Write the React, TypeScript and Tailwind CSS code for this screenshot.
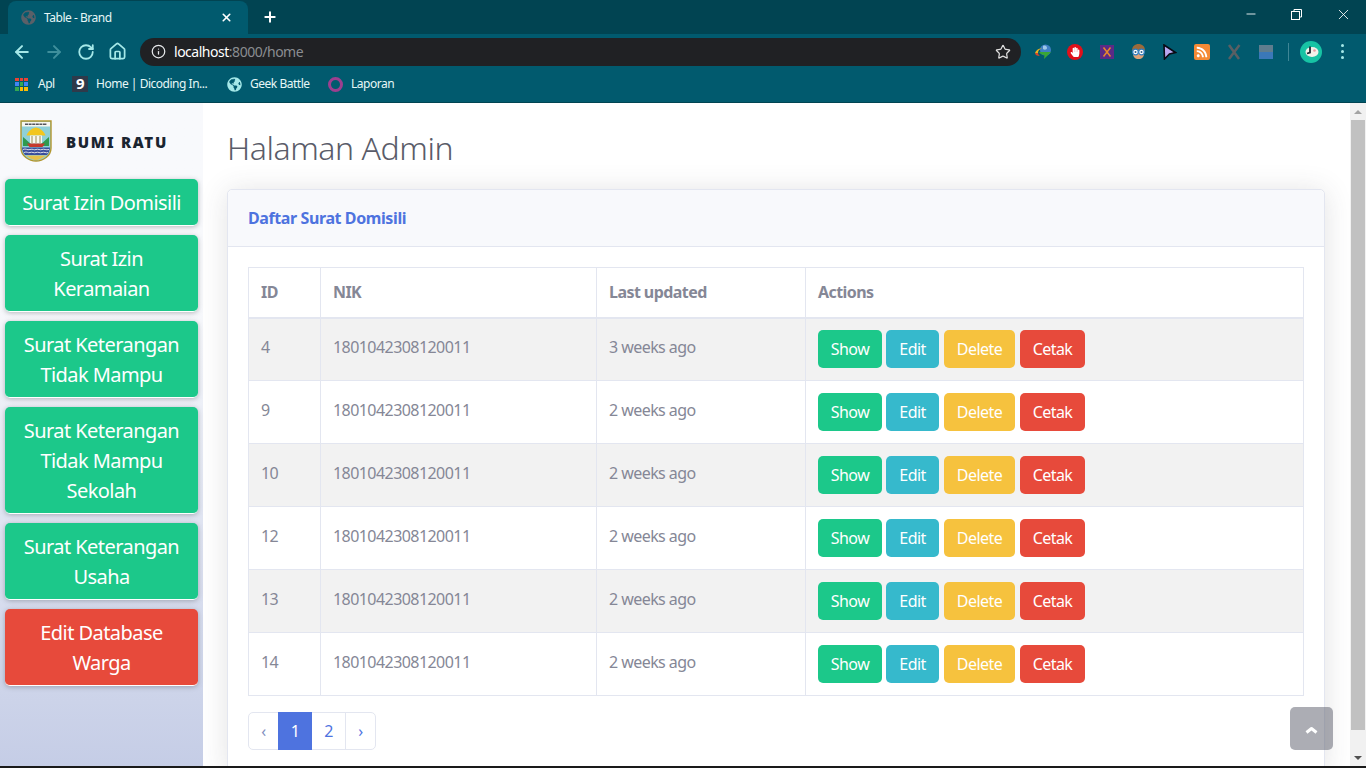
import { ArrowLeft, ArrowRight, House, Info, Minus, Plus, RotateCw, Star, X } from "lucide-react";
import { FaGlobeAmericas, FaHandPaper, FaRss } from "react-icons/fa";

const menu = [
  { label: ["Surat Izin Domisili"], color: "bg-[#1cc88a]" },
  { label: ["Surat Izin", "Keramaian"], color: "bg-[#1cc88a]" },
  { label: ["Surat Keterangan", "Tidak Mampu"], color: "bg-[#1cc88a]" },
  { label: ["Surat Keterangan", "Tidak Mampu", "Sekolah"], color: "bg-[#1cc88a]" },
  { label: ["Surat Keterangan", "Usaha"], color: "bg-[#1cc88a]" },
  { label: ["Edit Database", "Warga"], color: "bg-[#e74a3b]" },
];

const rows = [
  { id: 4, updated: "3 weeks ago" },
  { id: 9, updated: "2 weeks ago" },
  { id: 10, updated: "2 weeks ago" },
  { id: 12, updated: "2 weeks ago" },
  { id: 13, updated: "2 weeks ago" },
  { id: 14, updated: "2 weeks ago" },
];

const actions = [
  { label: "Show", className: "w-[64px] bg-[#1cc88a]" },
  { label: "Edit", className: "w-[53px] ml-[4px] bg-[#36b9cc]" },
  { label: "Delete", className: "w-[71px] ml-[5px] bg-[#f6c23e]" },
  { label: "Cetak", className: "w-[65px] ml-[5px] bg-[#e74a3b]" },
];

const appDots = [
  "bg-[#ea4335]", "bg-[#ea4335]", "bg-[#ea4335]",
  "bg-[#4285f4]", "bg-[#34a853]", "bg-[#4285f4]",
  "bg-[#34a853]", "bg-[#fbbc05]", "bg-[#fbbc05]",
];

function Crest() {
  return (
    <svg width="32" height="42" viewBox="0 0 32 42">
      <path d="M1 1h30v27c0 8-8 13-15 13S1 36 1 28z" fill="#8fd0d8" stroke="#b2962e" strokeWidth="1.400" />
      <rect x="2" y="2" width="28" height="4.500" fill="#f6f6f0" />
      <path d="M5 4.200h22" stroke="#55555a" strokeWidth="1.400" strokeDasharray="3 .6" />
      <path d="M16 7.500c5 1 8 4 9.500 8H6.500c1.500-4 4.500-7 9.500-8z" fill="#f3c61f" />
      <rect x="10" y="15.500" width="12" height="8" fill="#f8f8f2" />
      <path d="M12 16v7M16 16v7M20 16v7" stroke="#9a8a50" strokeWidth="1" />
      <path d="M3 17c3 2 5 5 8 7h10c3-2 5-5 8-7v9H3z" fill="#2f9a4f" />
      <path d="M7 23.500h18l-2.500 3.500H9.500z" fill="#c63a2d" />
      <path d="M2 27.500h28c-.3 3-1.200 5.200-3 7.500H5c-1.800-2.300-2.700-4.500-3-7.500z" fill="#3a4f9c" />
      <path d="M3 29.500c3-1.500 4 1 7 0s4 1 6 0 4 1 6 0 4 1 7 0M4 32.500c3-1.500 4 1 6 0s4 1 6 0 4 1 6 0 4 1 6 0" stroke="#ececec" strokeWidth=".9" fill="none" />
      <path d="M6 35.500c3 2.500 7 4.500 10 4.500s7-2 10-4.500z" fill="#e6c04a" />
    </svg>
  );
}

function Extensions() {
  return (
    <div className="flex items-center">
      <div className="ml-[14px] w-[17px] h-[16px]">
        <svg width="17" height="16" viewBox="0 0 17 16">
          <circle cx="10.500" cy="6" r="5.500" fill="#3f7fc4" />
          <path d="M8 2c2-1 4 0 4 2s-3 2-4 1z" fill="#9cc7e8" />
          <path d="M4 8h12l-7 7 .5-4C7 11 5 10 4 8z" fill="#3aa635" />
          <path d="M0 9c1-3 4-5 7-4.500C4 5 3 7 3 9z" fill="#e8b21e" />
          <path d="M0 9c0 2 2 3 5 3 0 0-2-1-2-3z" fill="#d9482b" />
        </svg>
      </div>
      <div className="ml-[15px] w-[16px] h-[16px] bg-[#e0101a] rounded-full flex items-center justify-center text-white">
        <FaHandPaper size={10} />
      </div>
      <div className="ml-[17px] w-[14px] h-[14px] bg-[#5b2a86] flex items-center justify-center">
        <svg width="12" height="12" viewBox="0 0 12 12">
          <path d="M2.500 1.500l7 9M9.500 1.500l-7 9" stroke="#e8892b" strokeWidth="1.500" />
        </svg>
      </div>
      <div className="ml-[17px]">
        <svg width="15" height="16" viewBox="0 0 15 16" className="block">
          <path d="M1 7c0-5 3-7 6.500-7S14 2 14 7z" fill="#9b6a3a" />
          <path d="M2 9h11c0 4-2 6-5.500 6S2 13 2 9z" fill="#dfa277" />
          <circle cx="4.500" cy="8" r="2.800" fill="#fff" stroke="#2f7fc4" strokeWidth="1.200" />
          <circle cx="10.500" cy="8" r="2.800" fill="#fff" stroke="#2f7fc4" strokeWidth="1.200" />
          <circle cx="4.500" cy="8" r="1" fill="#2c5f8a" />
          <circle cx="10.500" cy="8" r="1" fill="#2c5f8a" />
        </svg>
      </div>
      <div className="ml-[17px]">
        <svg width="14" height="16" viewBox="0 0 14 16" className="block">
          <path d="M1 1l11.500 7.500L6.500 10l-5 5z" fill="#b9a7f0" stroke="#0a0a14" strokeWidth="1.600" />
        </svg>
      </div>
      <div className="ml-[17px] w-[16px] h-[16px] rounded-[2px] bg-[#f58a35] flex items-center justify-center text-white">
        <FaRss size={12} />
      </div>
      <div className="ml-[17px]">
        <svg width="14" height="16" viewBox="0 0 14 16" className="block">
          <path d="M2 1l10 14M12.500 1L2 15" stroke="#5a5f63" strokeWidth="2.500" />
        </svg>
      </div>
      <div className="ml-[18px] w-[14px] h-[14px] flex flex-col">
        <div className="h-[7px] bg-[#5f7d8e]" />
        <div className="h-[7px] bg-[#3b78b8]" />
      </div>
      <div className="ml-[15px] w-px h-[18px] bg-[#3f8696]" />
      <div className="ml-[11px] w-[22px] h-[22px] rounded-full bg-[#17c3a4] flex items-center justify-center">
        <svg width="15" height="15" viewBox="0 0 15 15">
          <ellipse cx="8" cy="8" rx="6.500" ry="5" fill="#f4f1ea" />
          <path d="M6 2.500v6l-3 1" stroke="#1c2a33" strokeWidth="1.800" fill="none" />
          <circle cx="10.500" cy="6.500" r="1.300" fill="#e89aa0" />
        </svg>
      </div>
      <div className="ml-[19px] flex flex-col gap-[3px]">
        <span className="w-[3px] h-[3px] rounded-full bg-[#a5e8e8]" />
        <span className="w-[3px] h-[3px] rounded-full bg-[#a5e8e8]" />
        <span className="w-[3px] h-[3px] rounded-full bg-[#a5e8e8]" />
      </div>
    </div>
  );
}

function BrowserChrome() {
  return (
    <div className="h-[103px] shrink-0 bg-[#015a6e] border-b border-[#014452] tracking-[-0.03em]">
      <div className="h-[34px] bg-[#014452] flex items-end">
        <div className="ml-[8px] w-[240px] h-[33px] bg-[#015a6e] rounded-t-[8px] flex items-center pl-[13px] pr-[15px]">
          <FaGlobeAmericas size={15} className="text-[#5a6068]" />
          <span className="ml-[8px] text-[12px] text-[#e6f7f7] flex-1">Table - Brand</span>
          <X size={13} strokeWidth={3} className="text-white" />
        </div>
        <Plus size={16} strokeWidth={3} className="text-white ml-[14px] mb-[9px]" />
        <div className="ml-auto flex items-center h-[28px] self-start text-white">
          <Minus size={14} strokeWidth={1.500} className="mr-[33px]" />
          <svg width="11" height="11" viewBox="0 0 11 11" className="mr-[33px]" fill="none" stroke="#fff">
            <rect x="0.500" y="2.500" width="8" height="8" />
            <path d="M3 2.500V.5h7.500V8H8.500" />
          </svg>
          <X size={17} strokeWidth={1.200} className="mr-[14px]" />
        </div>
      </div>
      <div className="h-[35px] flex items-center">
        <ArrowLeft size={20} strokeWidth={2.400} className="ml-[12px] text-[#a5e8e8]" />
        <ArrowRight size={20} strokeWidth={2.400} className="ml-[12px] text-[#3f8f9c]" />
        <RotateCw size={18} strokeWidth={2.400} className="ml-[13px] text-[#a5e8e8]" />
        <House size={19} strokeWidth={2.200} className="ml-[13px] text-[#a5e8e8]" />
        <div className="ml-[13px] w-[881px] shrink-0 h-[28px] rounded-full bg-[#202124] flex items-center pl-[11px] pr-[10px]">
          <Info size={15} className="text-[#e8eaed]" />
          <span className="ml-[8px] text-[14px] text-white">localhost<span className="text-[#8a8d91]">:8000/home</span></span>
          <Star size={16} strokeWidth={1.800} className="ml-auto text-[#e0e0e0]" />
        </div>
        <Extensions />
      </div>
      <div className="h-[33px] pb-[3px] flex items-center text-[12px] text-[#e6f7f7]">
        <div className="ml-[15px] w-[13px] h-[13px] grid grid-cols-3 gap-[1px]">
          {appDots.map((c, i) => (
            <span key={i} className={c} />
          ))}
        </div>
        <span className="ml-[10px] w-[18px]">Apl</span>
        <span className="ml-[16px] w-[16px] h-[16px] bg-[#2f3a4a] text-white text-[15px] font-bold leading-[15px] text-center">9</span>
        <span className="ml-[8px] w-[112px] whitespace-nowrap">Home | Dicoding In...</span>
        <FaGlobeAmericas size={15} className="ml-[19px] text-[#a5e8e8]" />
        <span className="ml-[8px] w-[61px] whitespace-nowrap">Geek Battle</span>
        <span className="ml-[17px] w-[15px] h-[15px] rounded-full border-[3px] border-[#9c3f8f]" />
        <span className="ml-[8px]">Laporan</span>
      </div>
    </div>
  );
}

function Sidebar() {
  return (
    <aside className="w-[203px] shrink-0 bg-gradient-to-b from-[#f8f9fc] from-30% to-[#c5cde6] px-[5px]">
      <div className="h-[76px] flex items-center pl-[15px]">
        <Crest />
        <span className="ml-[14px] mt-[2px] text-[15px] font-black tracking-[1.700px] text-[#1a2430]">BUMI RATU</span>
      </div>
      <div className="flex flex-col gap-[9px]">
        {menu.map((item) => (
          <div
            key={item.label[0] + item.label.length}
            className={`${item.color} rounded-[5px] border-b border-white pt-[9px] pb-[7px] text-center text-[20px] leading-[30px] text-white shadow-[0_1px_5px_rgba(58,59,69,0.35)]`}
          >
            {item.label.map((line) => (
              <div key={line}>{line}</div>
            ))}
          </div>
        ))}
      </div>
    </aside>
  );
}

function DataTable() {
  return (
    <table className="w-[1056px] table-fixed border-collapse text-[16px] text-[#858796]">
      <thead>
        <tr className="h-[50px] text-left font-bold">
          <th className="w-[72px] border border-b-2 border-[#e3e6f0] px-[12px]">ID</th>
          <th className="w-[276px] border border-b-2 border-[#e3e6f0] px-[12px]">NIK</th>
          <th className="w-[209px] border border-b-2 border-[#e3e6f0] px-[12px]">Last updated</th>
          <th className="border border-b-2 border-[#e3e6f0] px-[12px]">Actions</th>
        </tr>
      </thead>
      <tbody>
        {rows.map((row, index) => (
          <tr key={row.id} className={`h-[63px] ${index % 2 === 0 ? "bg-[#f2f2f2]" : "bg-white"}`}>
            <td className="border border-[#e3e6f0] px-[12px] pb-[4px]">{row.id}</td>
            <td className="border border-[#e3e6f0] px-[12px] pb-[4px]">1801042308120011</td>
            <td className="border border-[#e3e6f0] px-[12px] pb-[4px]">{row.updated}</td>
            <td className="border border-[#e3e6f0] px-[12px]">
              <div className="flex">
                {actions.map((action) => (
                  <span
                    key={action.label}
                    className={`${action.className} h-[38px] rounded-[5px] text-center leading-[38px] text-white`}
                  >
                    {action.label}
                  </span>
                ))}
              </div>
            </td>
          </tr>
        ))}
      </tbody>
    </table>
  );
}

function Pagination() {
  return (
    <div className="mt-[16px] flex h-[38px] w-[128px] rounded-[5px] border border-[#e3e6f0] text-[16px] text-[#4e73df]">
      <div className="w-[29px] flex items-center justify-center text-[#7f8fc0]">‹</div>
      <div className="w-[34px] -my-px bg-[#4e73df] text-white flex items-center justify-center">1</div>
      <div className="w-[34px] flex items-center justify-center border-r border-[#e3e6f0]">2</div>
      <div className="flex-1 flex items-center justify-center">›</div>
    </div>
  );
}

function Scrollbar() {
  return (
    <div className="w-[16px] shrink-0 bg-[#f1f1f1] flex flex-col items-center">
      <div className="h-[17px] flex items-center">
        <span className="border-x-[4px] border-b-[4px] border-x-transparent border-b-[#a3a3a3]" />
      </div>
      <div className="w-[14px] h-[610px] bg-[#c1c1c1]" />
      <div className="mt-auto h-[17px] flex items-center">
        <span className="border-x-[4px] border-t-[4px] border-x-transparent border-t-[#505050]" />
      </div>
    </div>
  );
}

export default function App() {
  return (
    <div className="relative h-screen overflow-hidden flex flex-col bg-white font-['Noto_Sans',sans-serif]">
      <BrowserChrome />
      <div className="flex flex-1 min-h-0 tracking-[-0.035em]">
        <Sidebar />
        <main className="flex-1 min-w-0 px-[24px] pt-[23px] overflow-hidden">
          <h1 className="h-[44px] text-[32px] leading-[44px] font-light tracking-[-0.014em] text-[#5a5c69] mb-[19px]">Halaman Admin</h1>
          <div className="w-[1098px] rounded-[5px] border border-[#e3e6f0] bg-white shadow-[0_2.400px_28px_0_rgba(58,59,69,0.15)]">
            <div className="h-[57px] bg-[#f8f9fc] border-b border-[#e3e6f0] px-[20px] flex items-center text-[16px] font-bold tracking-[-0.025em] text-[#4e73df] rounded-t-[5px]">
              Daftar Surat Domisili
            </div>
            <div className="px-[20px] pt-[20px] pb-[20px]">
              <DataTable />
              <Pagination />
            </div>
          </div>
        </main>
        <Scrollbar />
      </div>
      <div className="h-[2px] shrink-0 bg-[#1a1a1a]" />
      <div className="absolute left-[1290px] top-[707px] w-[43px] h-[43px] rounded-[5px] bg-[#5a5c69]/50 flex items-center justify-center pt-[3px]">
        <svg width="13" height="8" viewBox="0 0 13 8" fill="none" stroke="#fff" strokeWidth="3" strokeLinejoin="round">
          <path d="M1.500 6.500l5-4 5 4" />
        </svg>
      </div>
    </div>
  );
}
